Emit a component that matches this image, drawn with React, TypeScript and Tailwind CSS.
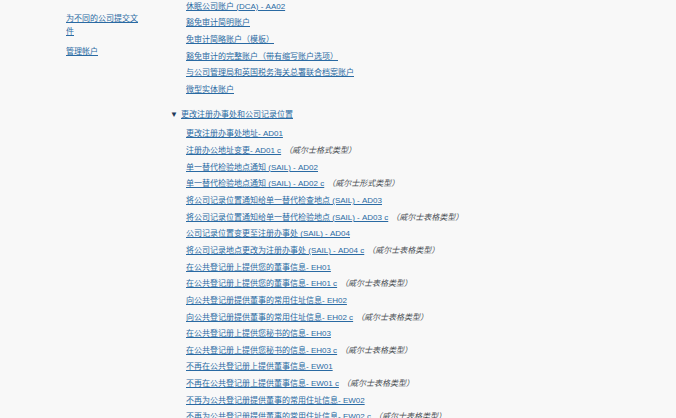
import React from "react";

const group1 = [
  "休眠公司账户 (DCA) - AA02",
  "豁免审计简明账户",
  "免审计简略账户（模板）",
  "豁免审计的完整账户（带有缩写账户选项）",
  "与公司管理局和英国税务海关总署联合档案账户",
  "微型实体账户",
];

const group2: [string, string?][] = [
  ["更改注册办事处地址- AD01"],
  ["注册办公地址变更- AD01 c", "（威尔士格式类型）"],
  ["单一替代检验地点通知 (SAIL) - AD02"],
  ["单一替代检验地点通知 (SAIL) - AD02 c", "（威尔士形式类型）"],
  ["将公司记录位置通知给单一替代检查地点 (SAIL) - AD03"],
  ["将公司记录位置通知给单一替代检验地点 (SAIL) - AD03 c", "（威尔士表格类型）"],
  ["公司记录位置变更至注册办事处 (SAIL) - AD04"],
  ["将公司记录地点更改为注册办事处 (SAIL) - AD04 c", "（威尔士表格类型）"],
  ["在公共登记册上提供您的董事信息- EH01"],
  ["在公共登记册上提供您的董事信息- EH01 c", "（威尔士表格类型）"],
  ["向公共登记册提供董事的常用住址信息- EH02"],
  ["向公共登记册提供董事的常用住址信息- EH02 c", "（威尔士表格类型）"],
  ["在公共登记册上提供您秘书的信息- EH03"],
  ["在公共登记册上提供您秘书的信息- EH03 c", "（威尔士表格类型）"],
  ["不再在公共登记册上提供董事信息- EW01"],
  ["不再在公共登记册上提供董事信息- EW01 c", "（威尔士表格类型）"],
  ["不再为公共登记册提供董事的常用住址信息- EW02"],
  ["不再为公共登记册提供董事的常用住址信息- EW02 c", "（威尔士表格类型）"],
];

const link = "text-[#2a6aa3] underline decoration-[#2a6aa3] underline-offset-[1px]";

export default function App() {
  return (
    <div
      className="w-[676px] h-[418px] overflow-hidden bg-[#f8f8f8] text-[8px]"
      style={{ fontFamily: '"Liberation Sans", "Noto Sans CJK SC", sans-serif' }}
    >
      <div className="flex">
        <aside className="w-[166px] shrink-0 pl-[66px] pt-[11.5px]">
          <div className="w-[76px] leading-[13px]">
            <a href="#" className={link}>为不同的公司提交文件</a>
          </div>
          <div className="mt-[7px] w-[76px] leading-[13px]">
            <a href="#" className={link}>管理帐户</a>
          </div>
        </aside>
        <main className="mt-[-1.3px] flex-1">
          <ul className="pl-[20px] leading-[16.65px]">
            {group1.map((t) => (
              <li key={t} className="whitespace-nowrap">
                <a href="#" className={link}>{t}</a>
              </li>
            ))}
          </ul>
          <div className="mt-[8.4px] flex items-center leading-[16.65px] pl-[4px]">
            <span className="text-[#1f3a5a] text-[8px] w-[11px]">▼</span>
            <a href="#" className={link}>更改注册办事处和公司记录位置</a>
          </div>
          <ul className="mt-[2.6px] pl-[20px] leading-[16.65px]">
            {group2.map(([t, note]) => (
              <li key={t} className="whitespace-nowrap">
                <a href="#" className={link}>{t}</a>
                {note && (
                  <span className="ml-[3px] italic text-[#4a4f54]">{note}</span>
                )}
              </li>
            ))}
          </ul>
        </main>
      </div>
    </div>
  );
}
